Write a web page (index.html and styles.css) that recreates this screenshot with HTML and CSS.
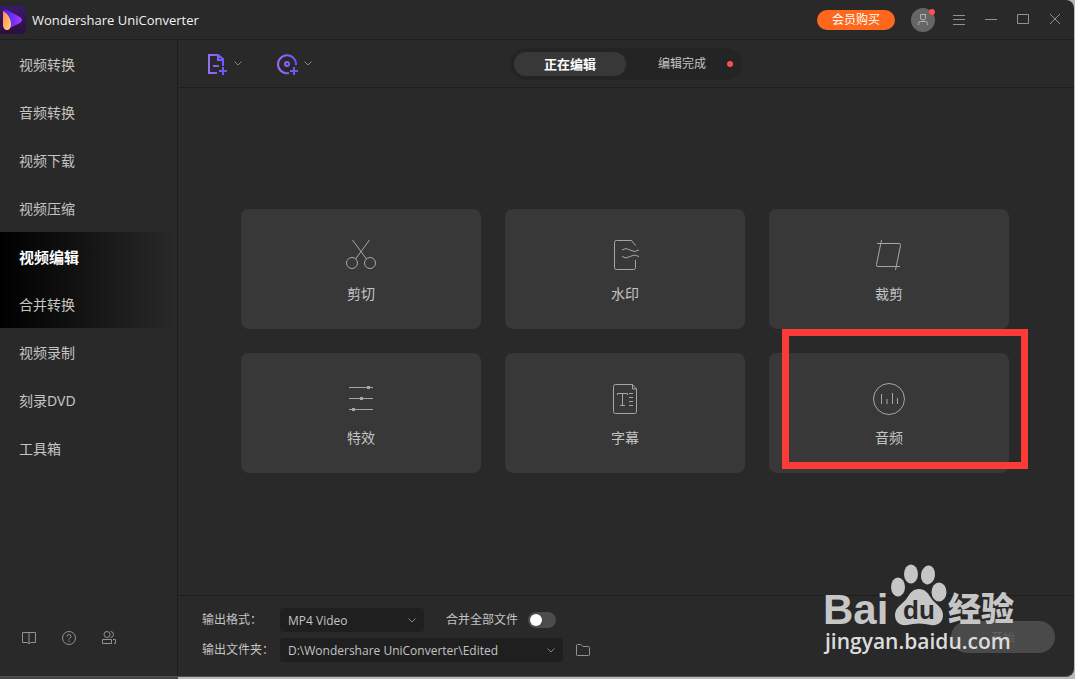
FILE: index.html
```html
<!DOCTYPE html>
<html lang="zh-CN">
<head>
  <meta charset="UTF-8">
  <meta name="viewport" content="width=device-width, initial-scale=1.0">
  <title>Wondershare UniConverter</title>
  <link rel="stylesheet" href="styles.css">
</head>
<body>
<div class="window">
  <header class="titlebar">
    <svg class="logo" width="26" height="28" viewBox="0 0 26 28">
      <defs>
        <linearGradient id="logoBg" x1="0" y1="0" x2="0" y2="1">
          <stop offset="0" stop-color="#3a1a6c"/><stop offset="1" stop-color="#2c0f3c"/>
        </linearGradient>
        <linearGradient id="logoPlay" x1="0" y1="0" x2="1" y2="0">
          <stop offset="0" stop-color="#3c22e8"/><stop offset="1" stop-color="#a63cff"/>
        </linearGradient>
        <linearGradient id="logoDrop" x1="0" y1="0" x2="1" y2="1">
          <stop offset="0" stop-color="#ff8a4c"/><stop offset="1" stop-color="#ffd27a"/>
        </linearGradient>
      </defs>
      <path d="M0 0h21a5 5 0 0 1 5 5v18a5 5 0 0 1-5 5H0z" fill="url(#logoBg)"/>
      <path d="M3 7q0-4 4-3l13 7q4 3 0 6L8 23q-5 2-5-4z" fill="url(#logoPlay)"/>
      <path d="M3 5c5 3 8 8 8 13 0 4-2 6-4 6s-4-2-4-5z" fill="url(#logoDrop)"/>
    </svg>
    <h1>Wondershare UniConverter</h1>
    <button class="vip">会员购买</button>
    <button class="avatar" aria-label="账户">
      <svg width="24" height="24" viewBox="0 0 24 24">
        <path d="M9.500 6.500h5v3.500q0 2-2.500 2t-2.500-2zM7.500 17v-1.500q0-2 2-2h5q2 0 2 2V17"/>
      </svg>
      <span class="dot"></span>
    </button>
    <div class="controls">
      <button aria-label="菜单"><svg width="12" height="12" viewBox="0 0 12 12"><path d="M0 1.500h12M0 5.500h12M0 10.500h12"/></svg></button>
      <button aria-label="最小化"><svg width="12" height="12" viewBox="0 0 12 12"><path d="M0 5.500h12"/></svg></button>
      <button aria-label="最大化"><svg width="12" height="12" viewBox="0 0 12 12"><path d="M.5.500h11v9H.5z"/></svg></button>
      <button aria-label="关闭"><svg width="12" height="12" viewBox="0 0 12 12"><path d="M1 0l10 10M11 0L1 10"/></svg></button>
    </div>
  </header>

  <nav class="sidebar">
    <ul>
      <li><a href="#">视频转换</a></li>
      <li><a href="#">音频转换</a></li>
      <li><a href="#">视频下载</a></li>
      <li><a href="#">视频压缩</a></li>
      <li><a href="#" class="shade active">视频编辑</a></li>
      <li><a href="#" class="shade">合并转换</a></li>
      <li><a href="#">视频录制</a></li>
      <li><a href="#">刻录DVD</a></li>
      <li><a href="#">工具箱</a></li>
    </ul>
    <div class="sidebar-tools">
      <button aria-label="教程">
        <svg width="16" height="16" viewBox="0 0 16 16"><path d="M8 2.500H1.500v10h5L8 14l1.500-1.500h5v-10zM8 2.500V14"/></svg>
      </button>
      <button aria-label="帮助">
        <svg width="16" height="16" viewBox="0 0 16 16"><circle cx="8" cy="8" r="6.500"/><path d="M6 6.500q0-2 2-2t2 2q0 1-1 1.500T8 9.500M8 10.500v1.500"/></svg>
      </button>
      <button aria-label="社区">
        <svg width="16" height="16" viewBox="0 0 16 16"><circle cx="6" cy="4.500" r="3"/><path d="M9.500 1.500q3 0 3 3t-3 3M1.500 13.500v-4h9v4zM12 9.500h2.500v4H13"/></svg>
      </button>
    </div>
  </nav>

  <main>
    <div class="toolbar">
      <div class="add-group">
        <button class="add" aria-label="添加文件">
          <svg width="22" height="22" viewBox="0 0 22 22">
            <defs>
              <linearGradient id="violet" gradientUnits="userSpaceOnUse" x1="0" y1="0" x2="22" y2="0">
                <stop offset="0" stop-color="#a070f8"/><stop offset="1" stop-color="#6450ff"/>
              </linearGradient>
            </defs>
            <path d="M11 20H3V2h9l5 4v7M12 2v5h5M7 13h6M17 14v8M13 18h8" stroke="url(#violet)"/>
          </svg>
          <svg class="chevron" width="8" height="5" viewBox="0 0 8 5"><path d="M.5.5L4 4 7.500.5"/></svg>
        </button>
        <button class="add" aria-label="添加光盘">
          <svg width="22" height="22" viewBox="0 0 22 22">
            <path d="M13 20A9 9 0 1 1 20 12M18 14v8M14 18h8" stroke="url(#violet)"/>
            <circle cx="11" cy="11" r="2" stroke="url(#violet)"/>
          </svg>
          <svg class="chevron" width="8" height="5" viewBox="0 0 8 5"><path d="M.5.5L4 4 7.500.5"/></svg>
        </button>
      </div>
      <div class="tabs">
        <button class="current">正在编辑</button>
        <button>编辑完成<span class="dot"></span></button>
      </div>
    </div>

    <section class="tools">
      <div class="grid">
        <button class="card">
          <svg width="32" height="32" viewBox="0 0 32 32"><circle cx="7" cy="24" r="5.500"/><circle cx="25" cy="24" r="5.500"/><path d="M7.500 1L21.500 20M24.500 1L10.500 20"/></svg>
          剪切
        </button>
        <button class="card">
          <svg width="32" height="32" viewBox="0 0 32 32"><path d="M26.500 6.500L22.500 1.500H7.500q-2 0-2 2v25q0 2 2 2h17q2 0 2-2V21M13 11q4-3 8 0t9 0M13 17.500q4 3 8 0t9 0"/></svg>
          水印
        </button>
        <button class="card">
          <svg width="32" height="32" viewBox="0 0 32 32"><path d="M4 4.500h22q2 0 1.500 2L22.500 31M8.500 1L3.500 25.500q-.5 2 1.500 2h22"/></svg>
          裁剪
        </button>
        <button class="card">
          <svg width="32" height="32" viewBox="0 0 32 32"><path d="M4 4.500h24M4 15.500h24M4 26.500h24"/><path class="knob" d="M22 4.500h3M15 15.500h3M7 26.500h3"/></svg>
          特效
        </button>
        <button class="card">
          <svg width="32" height="32" viewBox="0 0 32 32"><path d="M6.500 1.500h17l4 4.500v22.500q0 2-2 2h-19q-2 0-2-2v-25q0-2 2-2zM23.500 1.500V6h4M8.500 12v-1.500h10V12M13.500 10.500v12M11 22.500h5M20 10.500h4M20 14.500h4M20 18.500h4M20 22.500h4"/></svg>
          字幕
        </button>
        <button class="card marked">
          <svg width="32" height="32" viewBox="0 0 32 32"><circle cx="16" cy="16" r="15.500"/><path d="M8.500 11v10M14 16v5M19.500 10v11M24.500 15v6"/></svg>
          音频
        </button>
      </div>
    </section>

    <footer class="output">
      <div class="fields">
        <label for="format">输出格式：</label>
        <div class="row">
          <div class="select format">
            <select id="format"><option>MP4 Video</option></select>
            <svg class="chevron" width="8" height="5" viewBox="0 0 8 5"><path d="M.5.5L4 4 7.500.5"/></svg>
          </div>
          <label for="merge">合并全部文件</label>
          <input type="checkbox" id="merge" class="switch">
        </div>
        <label for="folder">输出文件夹：</label>
        <div class="row">
          <div class="select folder">
            <select id="folder"><option>D:\Wondershare UniConverter\Edited</option></select>
            <svg class="chevron" width="8" height="5" viewBox="0 0 8 5"><path d="M.5.5L4 4 7.500.5"/></svg>
          </div>
          <button class="open" aria-label="打开文件夹">
            <svg width="16" height="14" viewBox="0 0 16 14"><path d="M1.500 12V2.500q0-1 1-1H6l2 2h5.500q1 0 1 1V12q0 .5-1 .5h-11q-1 0-1-.5z"/></svg>
          </button>
        </div>
      </div>
      <button class="start" disabled>开始</button>
    </footer>
  </main>

  <svg class="watermark" width="196" height="96" viewBox="0 0 196 96">
    <text class="bai" x="0" y="60">Bai</text>
    <ellipse cx="75" cy="23" rx="7" ry="9.500"/>
    <ellipse cx="88" cy="10" rx="7" ry="9.500"/>
    <ellipse cx="105" cy="11" rx="7" ry="9.500" transform="rotate(8 105 11)"/>
    <ellipse cx="116" cy="28" rx="7.500" ry="9.500"/>
    <path d="M96 25c6 0 9 4 12 9 4 6 12 9 12 17 0 8-6 11-12 10-8-2-16-2-24 0-7 1-12-3-12-10 0-8 8-11 12-17 3-5 6-9 12-9z"/>
    <text class="du" x="80" y="55">du</text>
    <text class="jingyan" x="125" y="57">经验</text>
    <text class="url" x="2" y="85">jingyan.baidu.com</text>
  </svg>
</div>
</body>
</html>
```

FILE: styles.css
```css
:root {
  --background-color: #292929;
  --line-color: #1e1e1e;
  --card-color: #383838;
  --field-color: #1f1f1f;
  --text-color: #c4c4c4;
  --icon-color: #929292;
  --alert-color: #ff4f4f;
}

*, *::before, *::after {
  box-sizing: border-box;
}

body {
  margin: 0;
  padding: 0 1px 2px 0;
  background: linear-gradient(to right, #3f464c 178px, #b8b8b8 178px);
  color: var(--text-color);
  font-family: "Noto Sans", "Noto Sans CJK SC", sans-serif;
  font-size: 14px;
}

button {
  padding: 0;
  border: 0;
  background: none;
  color: inherit;
  font: inherit;
  cursor: pointer;
}

svg {
  display: block;
  fill: none;
  stroke: var(--icon-color);
}

.window {
  position: relative;
  display: grid;
  grid-template-columns: 178px 1fr;
  grid-template-rows: 40px 1fr;
  min-height: calc(100vh - 2px);
  background-color: var(--background-color);
  border-bottom: 1px solid #505050;
  border-radius: 0 8px 8px 0;
}

.dot {
  width: 6px;
  height: 6px;
  border-radius: 50%;
  background-color: var(--alert-color);
}

/* title bar */
.titlebar {
  grid-column: 1 / -1;
  display: flex;
  align-items: center;
  padding-right: 13px;
  border-bottom: 1px solid var(--line-color);
}

.logo {
  stroke: none;
}

.titlebar h1 {
  flex: 1;
  margin: 0 0 0 6px;
  color: #f2f2f2;
  font-family: "Open Sans", sans-serif;
  font-size: 13px;
  font-weight: 400;
}

.vip {
  width: 78px;
  height: 20px;
  border-radius: 10px;
  background-color: #ff671c;
  color: #fff;
  font-size: 12px;
  line-height: 20px;
}

.avatar {
  position: relative;
  width: 24px;
  height: 24px;
  margin: 0 18px 0 16px;
  border-radius: 50%;
  background-color: #666;
}

.avatar svg {
  stroke: #b4b4b4;
}

.avatar .dot {
  position: absolute;
  top: 1px;
  right: 0;
}

.controls {
  display: flex;
  gap: 20px;
}

/* sidebar */
.sidebar {
  display: flex;
  flex-direction: column;
  justify-content: space-between;
  border-right: 1px solid var(--line-color);
}

.sidebar ul {
  margin: 0;
  padding: 0;
  list-style: none;
}

.sidebar a {
  display: block;
  height: 48px;
  padding-left: 19px;
  color: var(--text-color);
  line-height: 50px;
  text-decoration: none;
}

.sidebar .shade {
  background: linear-gradient(to right, #000, var(--background-color));
}

.sidebar .active {
  color: #fff;
  font-size: 15px;
  font-weight: 700;
}

.sidebar-tools {
  display: flex;
  gap: 24px;
  padding: 0 0 30px 21px;
}

/* toolbar */
main {
  display: flex;
  flex-direction: column;
}

.toolbar {
  display: grid;
  grid-template-columns: 1fr auto 1fr;
  align-items: center;
  height: 48px;
  border-bottom: 1px solid var(--line-color);
}

.add-group {
  display: flex;
  gap: 34px;
  padding-left: 28px;
}

.add {
  display: flex;
  align-items: center;
  gap: 6px;
}

.add svg {
  stroke-width: 2;
}

.add svg.chevron,
svg.chevron {
  stroke: #868686;
  stroke-width: 1;
}

.tabs {
  display: flex;
  padding: 4px;
  border-radius: 16px;
  background-color: #242424;
}

.tabs button {
  position: relative;
  width: 112px;
  height: 24px;
  border-radius: 12px;
  font-size: 12px;
  line-height: 24px;
}

.tabs .current {
  background-color: var(--card-color);
  color: #fff;
  font-size: 13px;
  font-weight: 700;
}

.tabs .dot {
  position: absolute;
  top: 9px;
  right: 5px;
}

/* cards */
.tools {
  flex: 1;
  display: grid;
  place-content: center;
  padding: 0 2px 2px 0;
}

.grid {
  display: grid;
  grid-template-columns: repeat(3, 240px);
  gap: 24px;
}

.card {
  position: relative;
  display: flex;
  flex-direction: column;
  align-items: center;
  gap: 13px;
  height: 120px;
  padding-top: 30px;
  border-radius: 8px;
  background-color: var(--card-color);
  line-height: 20px;
}

.card svg {
  stroke: #a6a6a6;
}

.card .knob {
  stroke-width: 3;
}

.marked::after {
  content: "";
  position: absolute;
  top: -24px;
  left: 13px;
  width: 246px;
  height: 140px;
  border: 7px solid #fc3a37;
}

/* output settings */
.output {
  display: flex;
  align-items: flex-end;
  justify-content: space-between;
  padding: 12px 19px 14px 24px;
  border-top: 1px solid var(--line-color);
}

.fields {
  display: grid;
  grid-template-columns: 78px auto;
  row-gap: 6px;
  align-items: center;
}

.output label {
  font-size: 12px;
  line-height: 24px;
  white-space: nowrap;
}

.row {
  display: flex;
  align-items: center;
}

.select {
  display: grid;
  align-items: center;
}

.select > * {
  grid-area: 1 / 1;
}

.select .chevron {
  justify-self: end;
  margin-right: 8px;
  pointer-events: none;
}

.select select {
  appearance: none;
  width: 100%;
  height: 24px;
  padding: 0 8px;
  border: 0;
  border-radius: 4px;
  background-color: var(--field-color);
  color: var(--text-color);
  font-family: "Open Sans", sans-serif;
  font-size: 12px;
}

.format {
  width: 144px;
  margin-right: 22px;
}

.folder {
  width: 283px;
  margin-right: 12px;
}

.switch {
  appearance: none;
  width: 28px;
  height: 16px;
  margin: 0 0 0 10px;
  padding: 2px;
  border-radius: 8px;
  background-color: #4c4c4c;
}

.switch::before {
  content: "";
  display: block;
  width: 12px;
  height: 12px;
  border-radius: 50%;
  background-color: #fff;
}

.switch:checked::before {
  margin-left: 12px;
}

.start {
  width: 104px;
  height: 32px;
  margin-bottom: 9px;
  border-radius: 16px;
  background-color: #4a4a4a;
  color: #636363;
  font-size: 12px;
}

/* watermark */
.watermark {
  position: absolute;
  right: 55px;
  bottom: 16px;
  overflow: visible;
  fill: #c6c6c6;
  stroke: none;
  pointer-events: none;
}

.watermark .bai {
  font: 700 42px "Liberation Sans", sans-serif;
}

.watermark .du {
  fill: var(--background-color);
  font: 700 26px "Liberation Sans", sans-serif;
}

.watermark .jingyan {
  font: 900 33px "Noto Sans CJK SC", sans-serif;
}

.watermark .url {
  fill: #dcdcdc;
  font: 600 21px "Open Sans", sans-serif;
}
```
